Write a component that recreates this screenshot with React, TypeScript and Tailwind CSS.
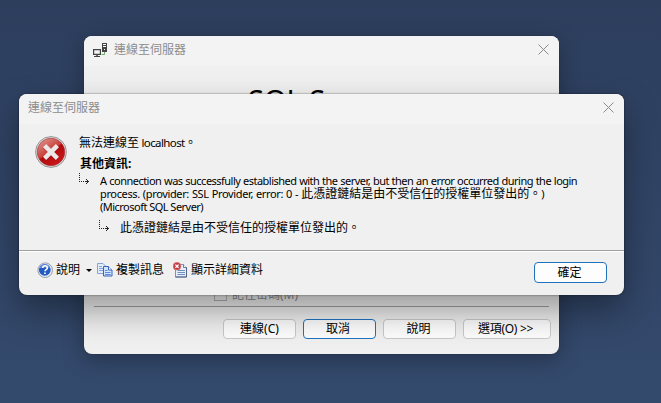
import React from 'react';

const CJK = "font-['Noto_Sans','Noto_Sans_CJK_TC',sans-serif]";

function CloseIcon() {
  return (
    <svg className="-mt-[3px] h-[11px] w-[11px]" viewBox="0 0 11 11" fill="none" stroke="#8a8a8a" strokeWidth="1">
      <path d="M.5.5l10 10M10.5.5l-10 10" />
    </svg>
  );
}

function ConnectIcon() {
  return (
    <svg className="-mt-[1px] h-[15px] w-[15px]" viewBox="0 0 15 15">
      <path d="M.6 6.600h6.800v4.800H.600z" fill="#f5f5f5" stroke="#444" strokeWidth="1.200" />
      <path d="M3.300 11.500h1.500v1.500H7v1H1v-1h2.300z" fill="#444" />
      <path d="M9 0h5v9H9z" fill="#444" />
      <path d="M10 1.500h3M10 3.500h3" stroke="#fff" strokeWidth="1" />
      <path d="M11 6h1v1h-1z" fill="#fff" />
      <path d="M8.500 11.500h3V9" fill="none" stroke="#58a458" strokeWidth=".9" />
    </svg>
  );
}

function ErrorIcon() {
  return (
    <svg className="h-8 w-8 shrink-0" viewBox="0 0 32 32">
      <defs>
        <linearGradient id="red" x1=".1" y1="0" x2=".8" y2="1">
          <stop offset="0" stopColor="#e09a94" />
          <stop offset=".48" stopColor="#c9403c" />
          <stop offset=".52" stopColor="#b30a0c" />
          <stop offset="1" stopColor="#cc1a1c" />
        </linearGradient>
      </defs>
      <circle cx="16" cy="16" r="15.400" fill="#e4e4e4" stroke="#8c8888" strokeWidth=".9" />
      <circle cx="16" cy="16" r="13.800" fill="url(#red)" stroke="#9c3030" strokeWidth=".6" />
      <path d="M10 10.500l12.500 12.500M22.500 10.500L10 23" stroke="#941416" strokeOpacity=".6" strokeWidth="5" />
      <path d="M9.600 9.600l12.800 12.800M22.400 9.600L9.600 22.400" stroke="#ece8e8" strokeWidth="4.500" />
    </svg>
  );
}

function HelpIcon() {
  return (
    <svg className="h-4 w-4" viewBox="0 0 16 16">
      <circle cx="8.200" cy="8.200" r="7.300" fill="#e9edf4" stroke="#8a93a4" strokeWidth=".9" />
      <circle cx="7.800" cy="7.800" r="5.900" fill="#2459c4" />
      <path d="M2.600 6.300a5.400 5.400 0 0 1 10.400 0Q8 4.500 2.600 6.300z" fill="#6590de" />
      <path d="M5.700 6c0-3 4.600-2.800 4.600 0 0 1.700-2.300 1.500-2.300 3.300" fill="none" stroke="#fff" strokeWidth="1.600" />
      <path d="M7.100 10.500h1.700V12H7.100z" fill="#fff" />
    </svg>
  );
}

function CopyIcon() {
  return (
    <svg className="h-4 w-4" viewBox="0 0 16 16" strokeWidth="1">
      <path d="M.5 1.500h5.500l2.500 2.500v7.500h-8z" fill="#e4edfb" stroke="#86a2d2" />
      <path d="M2 4.500h3M2 6.500h5M2 8.500h5" stroke="#7ea4e0" />
      <path d="M6.500 4.500h5l3.500 3.500v6h-8.500z" fill="#d3e3fb" stroke="#3763b8" />
      <path d="M11.500 4.500v3.500H15" fill="#fff" stroke="#3763b8" />
      <path d="M8 8.500h2.500M8 10.500h5.500M8 12.500h5.500" stroke="#5d8bdc" />
    </svg>
  );
}

function DetailsIcon() {
  return (
    <svg className="h-4 w-4" viewBox="0 0 16 16" strokeWidth="1">
      <path d="M2.500 2.500h8l3 3v9.500h-11z" fill="#e6eefa" stroke="#8292ae" />
      <path d="M10.500 2.500v3h3" fill="#fff" stroke="#6b7c9c" />
      <path d="M13.500 5.500V15h-11" fill="none" stroke="#4f6386" />
      <path d="M4.500 8.500H12M4.500 10.500H12M4.500 12.500H12" stroke="#7490c0" />
      <circle cx="4" cy="4.200" r="3.900" fill="#c63a3e" stroke="#dc9090" strokeWidth=".6" />
      <path d="M2.400 2.600l3.200 3.200M5.600 2.600L2.400 5.800" stroke="#fff" strokeWidth="1.300" />
    </svg>
  );
}

function NestArrow() {
  return (
    <svg className="-mt-px -ml-px h-[11px] w-[11px] shrink-0" viewBox="0 0 11 11" fill="#222" shapeRendering="crispEdges">
      <path d="M0 0h1v1H0zM0 2h1v1H0zM0 4h1v1H0zM0 6h1v1H0zM0 8h1v1H0zM2 8h1v1H2zM4 8h1v1H4zM6 8h4v1H6zM8 7h1v3H8zM7 6h1v1H7zM7 10h1v1H7z" />
    </svg>
  );
}

function Button({ className, children }: { className: string; children: React.ReactNode }) {
  return (
    <button className={`flex items-center justify-center rounded-[4px] border text-[12px] leading-none whitespace-nowrap text-black ${className}`}>
      {children}
    </button>
  );
}

function ConnectDialog() {
  return (
    <section className="absolute top-[36px] left-[84px] flex h-[318px] w-[475px] flex-col overflow-hidden rounded-lg bg-[#f0f0f0] shadow-[0_6px_22px_rgba(0,0,0,0.3),0_0_1px_rgba(0,0,0,0.6)]">
      <header className="flex h-[30px] shrink-0 items-center bg-[#f3f3f3] pr-[10px] pl-[9px]">
        <ConnectIcon />
        <span className="-mt-[2px] ml-[6px] flex-1 text-[12px] leading-none text-[#8d8d8d]">連線至伺服器</span>
        <CloseIcon />
      </header>
      <h1 className="mt-[14px] ml-[164px] h-[208px] shrink-0 text-[29px] leading-[40px] whitespace-nowrap text-black">SQL Server</h1>
      <div className="ml-[130px] flex h-[13px] shrink-0 items-center gap-[5px] text-[12px] leading-none text-[#8b8b8b]">
        <span className="h-[13px] w-[13px] shrink-0 border border-[#b4b4b4]" />
        <span>記住密碼(M)</span>
      </div>
      <div className="mt-[5px] mr-[10px] ml-[10px] h-px shrink-0 bg-[#a0a0a0]" />
      <footer className="mt-[12px] mr-[8px] flex h-[20px] shrink-0 justify-end gap-[7px]">
        <Button className="w-[73px] border-[#c9c9c9] bg-[#fdfdfd]">連線(C)</Button>
        <Button className="w-[73px] border-[#1f73be] bg-[#fdfdfd] pr-[3px]">取消</Button>
        <Button className="w-[73px] border-[#c9c9c9] bg-[#fdfdfd] pr-[2px]">說明</Button>
        <Button className="w-[88px] border-[#c9c9c9] bg-[#fdfdfd] pr-[3px] tracking-[-0.3px]">選項(O) &gt;&gt;</Button>
      </footer>
    </section>
  );
}

function ErrorDialog() {
  return (
    <section className="absolute top-[94px] left-[19px] flex h-[201px] w-[605px] flex-col overflow-hidden rounded-lg bg-[#f0f0f0] shadow-[0_16px_34px_rgba(0,0,0,0.36),0_0_2px_rgba(0,0,0,0.6)]">
      <header className="flex h-[30px] shrink-0 items-center justify-between bg-[#f3f3f3] pr-[10px] pl-[9px]">
        <span className="-mt-[2px] text-[12px] leading-none text-[#8d8d8d]">連線至伺服器</span>
        <CloseIcon />
      </header>
      <main className="flex h-[126px] shrink-0 gap-[13px] pt-[12px] pl-[16px] text-black">
        <ErrorIcon />
        <div className="whitespace-nowrap">
          <p className="-ml-px text-[12px] leading-[14px]">無法連線至<span className="text-[11.5px] tracking-[-0.6px]"> localhost</span>。</p>
          <p className="mt-[7px] text-[12px] leading-[14px] font-bold">其他資訊:</p>
          <div className="mt-[3px] flex gap-[10px]">
            <NestArrow />
            <div className="text-[11px] leading-[13px]">
              <p className="tracking-[-0.52px] [word-spacing:0.4px]">A connection was successfully established with the server, but then an error occurred during the login</p>
              <p className="flex h-[13px] items-center">
                <span className="tracking-[-0.36px] [word-spacing:0.5px] whitespace-pre">process. (provider: SSL Provider, error: 0 - </span>
                <span className="text-[12px]">此憑證鏈結是由不受信任的授權單位發出的。</span>
                <span>)</span>
              </p>
              <p className="tracking-[-0.52px]">(Microsoft SQL Server)</p>
            </div>
          </div>
          <div className="mt-[8px] ml-[20px] flex gap-[10px]">
            <NestArrow />
            <p className="text-[12px] leading-[14px]">此憑證鏈結是由不受信任的授權單位發出的。</p>
          </div>
        </div>
      </main>
      <footer className="flex h-[45px] shrink-0 items-start border-t border-[#a0a0a0] pr-[17px] pl-[18px] text-[12px] leading-none whitespace-nowrap text-black shadow-[inset_0_1px_0_#fff]">
        <div className="mt-[11px] flex h-4 flex-1 items-center">
          <HelpIcon />
          <span className="ml-[3px]">說明</span>
          <span className="ml-[6px] border-x-[3px] border-t-[3px] border-x-transparent border-t-black" />
          <span className="ml-[5px]"><CopyIcon /></span>
          <span className="ml-[3px]">複製訊息</span>
          <span className="ml-[9px]"><DetailsIcon /></span>
          <span className="ml-[2px]">顯示詳細資料</span>
        </div>
        <Button className="mt-[11px] h-[21px] w-[73px] border-[#1f73be] bg-[#fdfdfd] pr-[2px]">確定</Button>
      </footer>
    </section>
  );
}

export default function App() {
  return (
    <div className={`relative h-[403px] w-[661px] overflow-hidden bg-linear-to-b from-[#2d3e5d] to-[#344a6d] ${CJK}`}>
      <ConnectDialog />
      <ErrorDialog />
    </div>
  );
}
